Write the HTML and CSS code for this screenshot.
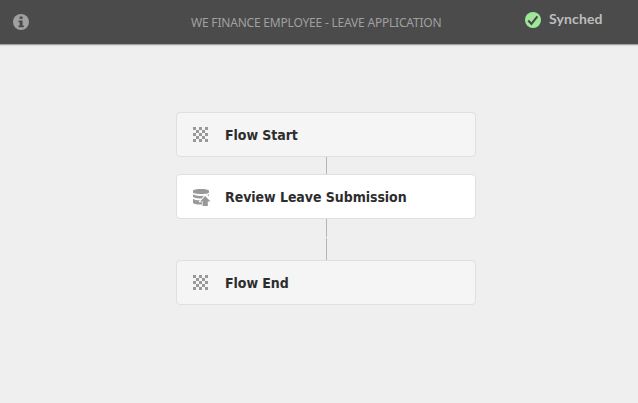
FILE: index.html
```html
<!DOCTYPE html>
<html lang="en">
<head>
<meta charset="utf-8">
<title>Leave Application</title>
<link rel="stylesheet" href="styles.css">
</head>
<body>
<svg class="defs" aria-hidden="true">
  <symbol id="checker" viewBox="0 0 5 5">
    <path d="M0 0h1v1H0zM2 0h1v1H2zM4 0h1v1H4zM1 1h1v1H1zM3 1h1v1H3zM0 2h1v1H0zM2 2h1v1H2zM4 2h1v1H4zM1 3h1v1H1zM3 3h1v1H3zM0 4h1v1H0zM2 4h1v1H2zM4 4h1v1H4z"/>
  </symbol>
</svg>
<header class="topbar">
  <svg class="info" viewBox="0 0 16 16"><circle cx="8" cy="8" r="8" fill="#a0a0a0"/><path d="M6.600 2.500h3v2.400h-3zM5.500 6.400h4.100v5h1.200v1.800H5.500v-1.800h1.200V8.200H5.500z" fill="#4b4b4b"/></svg>
  <h1 class="title">WE FINANCE EMPLOYEE - LEAVE APPLICATION</h1>
  <div class="status">
    <svg class="check" viewBox="0 0 16 16"><circle cx="8" cy="8" r="8" fill="#9fe89b"/><path d="M3.200 8.500l3.200 3.300 6-7.400" fill="none" stroke="#454b45" stroke-width="2.1"/></svg>
    <span class="status-text">Synched</span>
  </div>
</header>
<main class="flow">
  <div class="step"><svg class="icon"><use href="#checker"/></svg><span class="label">Flow Start</span></div>
  <div class="line short"></div>
  <div class="step active">
    <svg class="icon database" viewBox="0 0 18 18"><path d="M0 2.800C0 .4 16 .4 16 2.800v1.400C16 6.700 0 6.700 0 4.200zM0 6.300c2 1.600 7 2 11 1.400L8.500 10.400C5 10.600 1.500 10.200 0 9.100zM13.500 7.200L16 6.300v1.900l-1-1zM0 10.700c1.500 1 4 1.500 6.900 1.500L6 13.300v1h3v2.200c-4 .3-9-.3-9-2z"/><path d="M12.200 8l5.300 5.500h-2.700V18H9.600v-4.500H7z"/></svg>
    <span class="label">Review Leave Submission</span>
  </div>
  <div class="line upper"></div>
  <div class="line lower"></div>
  <div class="step"><svg class="icon"><use href="#checker"/></svg><span class="label">Flow End</span></div>
</main>
</body>
</html>
```
FILE: styles.css
```css
* { box-sizing: border-box; }
body {
  margin: 0;
  height: 403px;
  overflow: hidden;
  background: #efefef;
  font-family: "Noto Sans", "Open Sans", sans-serif;
}
.defs { display: none; }
.topbar {
  display: grid;
  grid-template-columns: 178px 251px 1fr;
  height: 44px;
  padding-left: 13px;
  background: #4b4b4b;
  box-shadow: 0 1px 0 #a3a3a3, 0 2px 0 #dadada;
}
.info { width: 16px; height: 16px; margin-top: 14px; }
.title {
  margin: 13px 0 0;
  font-size: 12px;
  line-height: 20px;
  font-weight: 400;
  letter-spacing: -0.2px;
  white-space: nowrap;
  color: #a0a0a0;
}
.status {
  display: flex;
  align-items: flex-start;
  margin-left: 83px;
  padding-top: 12px;
}
.check { width: 16px; height: 16px; }
.status-text {
  margin: -3px 0 0 8px;
  font: 700 14px/20px Lato, sans-serif;
  letter-spacing: 0.15px;
  color: #bdbdbd;
}
.flow {
  display: flex;
  flex-direction: column;
  width: 300px;
  margin: 68px 0 0 176px;
}
.step {
  display: flex;
  align-items: center;
  height: 45px;
  padding-left: 16px;
  background: #f5f5f5;
  border: 1px solid #dfdfdf;
  border-radius: 4px;
}
.active { background: #fff; }
.icon { width: 15px; height: 15px; fill: #999; }
.database { width: 18px; height: 18px; margin-right: -3px; }
.label {
  margin-left: 17px;
  font: 700 14px/20px "DejaVu Sans Condensed", "DejaVu Sans", sans-serif;
  font-stretch: condensed;
  letter-spacing: -0.06px;
  white-space: nowrap;
  color: #2d2d2d;
}
.line { width: 1px; margin-left: 150px; background: #b5b5b5; }
.short { height: 17px; }
.upper { height: 18px; margin-bottom: 1px; }
.lower { height: 22px; }
```
